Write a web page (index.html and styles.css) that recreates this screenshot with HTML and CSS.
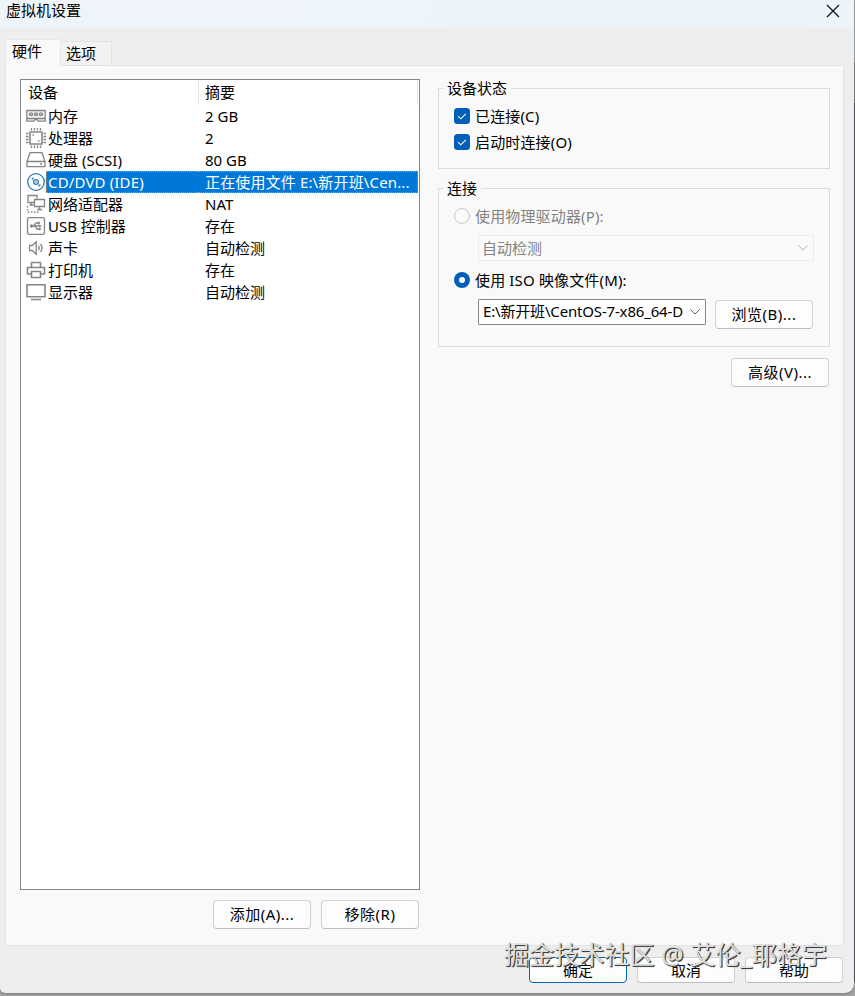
FILE: index.html
```html
<!DOCTYPE html>
<html lang="zh-CN">
<head>
<meta charset="utf-8">
<title>虚拟机设置</title>
<link rel="stylesheet" href="styles.css">
</head>
<body>
<div class="desktop">
<main class="dialog">
  <header class="titlebar">
    <h1>虚拟机设置</h1>
    <svg class="close" width="14" height="14" viewBox="0 0 14 14"><path d="M1 1l12 12M13 1L1 13" fill="none" stroke="#111" stroke-width="1.3"/></svg>
  </header>
  <nav class="tabs"><span class="tab active">硬件</span><span class="tab">选项</span></nav>
  <section class="panel">
    <div class="left">
      <div class="list">
        <div class="head"><span class="name">设备</span><span class="sum">摘要</span></div>
        <div class="row"><svg class="ico" viewBox="0 0 20 22"><path d="M.8 5.500h18.400v10.700h-7l-1.200-1.500H9l-1.200 1.500h-7zM1 13.500h18" fill="#f3f3f3"/><path d="M3.500 8h3v2.500h-3zM8.500 8h3v2.500h-3zM13.500 8h3v2.500h-3z" fill="#b5b5b5" stroke-width="1"/></svg><span class="name">内存</span><span class="sum">2 GB</span></div>
        <div class="row"><svg class="ico" viewBox="0 0 20 22"><path d="M4 5h12v12H4z" stroke-width="1.6"/><path d="M5.500 1v2.500M8.500 1v2.500M11.500 1v2.500M14.500 1v2.500M5.500 18.500V21M8.500 18.500V21M11.500 18.500V21M14.500 18.500V21M0 6.500h2.500M0 9.500h2.500M0 12.500h2.500M0 15.500h2.500M17.500 6.500H20M17.500 9.500H20M17.500 12.500H20M17.500 15.500H20"/><path d="M6.500 8h1.500M12 14h1.500"/></svg><span class="name">处理器</span><span class="sum">2</span></div>
        <div class="row"><svg class="ico" viewBox="0 0 20 22"><path d="M4 3.700h12l3 8.800v5.200H1v-5.200zM1 12.500h18M14 15h2"/></svg><span class="name">硬盘 (SCSI)</span><span class="sum">80 GB</span></div>
        <div class="row selected"><svg class="ico disc" viewBox="0 0 20 22"><circle cx="10" cy="11" r="8.300"/><circle cx="10" cy="11" r="2.300"/><path d="M9.500 11h1M5.800 8.500l1.700-1.700M12.500 15.200l1.700-1.700"/></svg><span class="name">CD/DVD (IDE)</span><span class="sum">正在使用文件 E:\新开班\Cen...</span></div>
        <div class="row"><svg class="ico" viewBox="0 0 20 22"><path d="M8 9.500H2v-7h9v3M8.500 6.500h10v7h-10zM11 16.500h5M13.500 14v2M3.500 12h4M5.500 10v2"/><path d="M1.500 13v6.500M2 19h11" stroke-dasharray="1.500 1.500"/></svg><span class="name">网络适配器</span><span class="sum">NAT</span></div>
        <div class="row"><svg class="ico" viewBox="0 0 20 22"><rect x="1.500" y="2.700" width="17" height="16.600" rx="2"/><path d="M5 11h9M7.500 11l2.500-3h2M9 11l2 3h2"/><circle cx="5.500" cy="11" r="1" fill="#858585"/><path d="M12 7h1.500v2H12zM13 13h1.500v2H13zM13.500 9.800l2 1.200-2 1.200z" fill="#858585" stroke-width=".5"/></svg><span class="name">USB 控制器</span><span class="sum">存在</span></div>
        <div class="row"><svg class="ico" viewBox="0 0 20 22"><path d="M3.500 8.500h2.700l4-3.700v12.400l-4-3.700H3.500zM12.300 8.800q1.700 2.200 0 4.400M14.500 7q3 4 0 8"/></svg><span class="name">声卡</span><span class="sum">自动检测</span></div>
        <div class="row"><svg class="ico" viewBox="0 0 20 22"><path d="M5.500 8V3.500h9V8M5.500 15h-4V8.500h17V15h-4M5.500 12.500h9v6h-9z" stroke-width="1.600"/></svg><span class="name">打印机</span><span class="sum">存在</span></div>
        <div class="row"><svg class="ico" viewBox="0 0 20 22"><path d="M1 3.700h18v12H1zM5 18.500h10" stroke-width="1.600"/></svg><span class="name">显示器</span><span class="sum">自动检测</span></div>
      </div>
      <div class="listbuttons"><span class="btn">添加(A)...</span><span class="btn">移除(R)</span></div>
    </div>
    <div class="right">
      <fieldset class="state">
        <legend>设备状态</legend>
        <div class="option"><svg class="mark" viewBox="0 0 16 16"><rect width="16" height="16" rx="3.500" fill="#005fb8"/><path d="M4.200 8.200l2.600 2.600 5-5" fill="none" stroke="#fff" stroke-width="1.100"/></svg>已连接(C)</div>
        <div class="option"><svg class="mark" viewBox="0 0 16 16"><rect width="16" height="16" rx="3.500" fill="#005fb8"/><path d="M4.200 8.200l2.600 2.600 5-5" fill="none" stroke="#fff" stroke-width="1.100"/></svg>启动时连接(O)</div>
      </fieldset>
      <fieldset class="conn">
        <legend>连接</legend>
        <div class="option off"><svg class="mark" viewBox="0 0 16 16"><circle cx="8" cy="8" r="7.400" fill="#fbfbfb" stroke="#c4c4c4"/></svg>使用物理驱动器(P):</div>
        <div class="combo off"><span>自动检测</span><svg class="chev" viewBox="0 0 10 6"><path d="M.5.500L5 5 9.500.500"/></svg></div>
        <div class="option iso"><svg class="mark" viewBox="0 0 16 16"><circle cx="8" cy="8" r="8" fill="#005fb8"/><circle cx="8" cy="8" r="3" fill="#fff"/></svg>使用 ISO 映像文件(M):</div>
        <div class="file"><div class="combo"><span class="path">E:\新开班\CentOS-7-x86_64-D</span><svg class="chev" viewBox="0 0 10 6"><path d="M.5.500L5 5 9.500.500"/></svg></div><span class="btn">浏览(B)...</span></div>
      </fieldset>
      <span class="btn advanced">高级(V)...</span>
    </div>
  </section>
  <footer class="actions"><span class="btn primary">确定</span><span class="btn">取消</span><span class="btn">帮助</span></footer>
  <div class="watermark">掘金技术社区 @ 艾伦_耶格宇</div>
</main>
</div>
</body>
</html>
```
FILE: styles.css
```css
* { box-sizing: border-box; }
body {
  margin: 0;
  font: 15px/22px "Noto Sans", "Noto Sans CJK SC", sans-serif;
  color: #000;
}
.desktop {
  height: 996px;
  overflow: hidden;
  padding-right: 1px;
  background: linear-gradient(#a4a9ad 0 62px, #777 62px 103px, #303236 103px 982px, #a5a5a5 982px);
}
.dialog {
  position: relative;
  height: 993px;
  background: #eee;
  border-radius: 0 0 9px 5px;
  box-shadow: 0 1px 3px #777;
}
.titlebar {
  height: 39px;
  display: flex;
  justify-content: space-between;
  padding: 0 14px 0 6px;
  background: linear-gradient(100deg, #eff4f9, #edf5fa) 0 0 / 100% 28px no-repeat, #eee;
}
.titlebar h1 { margin: 0; font-size: 15px; font-weight: 400; line-height: 20px; }
.close { margin-top: 4px; }
.tabs { display: flex; align-items: flex-end; height: 26px; padding-left: 5px; }
.tab {
  width: 51px;
  height: 24px;
  padding-left: 5px;
  line-height: 22px;
  background: #f2f2f2;
  border: 1px solid #e3e3e3;
  border-left: 0;
  border-bottom: 0;
}
.tab.active {
  width: 56px;
  height: 27px;
  padding-left: 6px;
  line-height: 22px;
  background: #f9f9f9;
  border: 1px solid #e6e6e6;
  border-bottom: 0;
  margin-bottom: -1px;
  z-index: 1;
}
.panel {
  display: flex;
  gap: 18px;
  width: 839px;
  height: 881px;
  margin-left: 5px;
  padding: 13px 13px 0 14px;
  background: #f9f9f9;
  border: 1px solid #e3e3e3;
}
.left { width: 400px; }
.list { height: 811px; border: 1px solid #828790; background: #fff; }
.head { display: flex; height: 25px; line-height: 25px; }
.head .name { width: 178px; padding-left: 7px; border-right: 1px solid #e5e5e5; }
.head .sum { flex: 1; margin-right: 1px; padding-left: 6px; border-right: 1px solid #e5e5e5; }
.row { display: flex; height: 22px; padding: 0 1px 0 5px; white-space: nowrap; }
.name { width: 152px; padding-left: 2px; }
.row .sum { flex: 1; padding-left: 7px; }
.ico { width: 20px; height: 22px; flex: none; fill: none; stroke: #858585; stroke-width: 1.3; }
.disc { stroke: #2f76b5; }
.row.selected .name, .row.selected .sum {
  color: #fff;
  background: #0078d7;
  border: 1px dotted #d08a42;
  line-height: 20px;
  letter-spacing: .15px;
}
.row.selected .name { border-right: 0; padding-left: 1px; }
.row.selected .sum { border-left: 0; }
.listbuttons { display: flex; justify-content: flex-end; gap: 10px; margin: 10px 1px 0 0; }
.btn {
  display: block;
  flex: none;
  width: 98px;
  height: 29px;
  line-height: 27px;
  text-align: center;
  white-space: nowrap;
  letter-spacing: .5px;
  background: #fdfdfd;
  border: 1px solid #d0d0d0;
  border-bottom-color: #bdbdbd;
  border-radius: 4px;
}
.right { width: 392px; }
fieldset { min-width: 0; margin: 0; padding: 0 0 0 15px; border: 1px solid #dcdcdc; }
legend { height: 22px; margin-left: -11px; padding: 0 4px; }
.state { height: 92px; margin-top: -2px; }
.conn { height: 170px; margin-top: 8px; }
.option { display: flex; align-items: center; gap: 5px; height: 26px; line-height: 26px; letter-spacing: .15px; }
.state .option:nth-of-type(1) { margin-top: 4px; }
.mark { width: 16px; height: 16px; flex: none; }
.conn .option:nth-of-type(1) { margin-top: 4px; }
.off { color: #838383; }
.combo {
  display: flex;
  align-items: center;
  justify-content: space-between;
  width: 228px;
  height: 26px;
  padding: 0 5px 0 4px;
  line-height: 22px;
  white-space: nowrap;
  background: #fff;
  border: 1px solid #858585;
  border-radius: 1px;
}
.path { letter-spacing: -.17px; padding-bottom: 2px; }
.combo.off { width: 336px; margin: 6px 0 0 24px; padding-left: 3px; border-color: #ededed; background: #fafafa; }
.chev { width: 10px; height: 6px; fill: none; stroke: #606060; }
.combo.off .chev { stroke: #b5b5b5; }
.iso { margin-top: 6px; }
.file { display: flex; gap: 9px; margin: 6px 0 0 24px; }
.file .btn { margin-top: 1px; }
.advanced { margin: 11px 0 0 293px; }
.actions { display: flex; justify-content: flex-end; gap: 10px; padding: 11px 11px 0 0; }
.actions .btn { height: 26px; line-height: 24px; letter-spacing: 0; }
.actions .primary { border-color: #0067b8; }
.watermark {
  position: absolute;
  left: 504px;
  top: 936px;
  font-size: 25px;
  line-height: 36px;
  letter-spacing: .1px;
  white-space: nowrap;
  color: #dedede;
  text-shadow: 1px 1px 0 #3f3f3f, 1px 1px 1px #555;
}
```
